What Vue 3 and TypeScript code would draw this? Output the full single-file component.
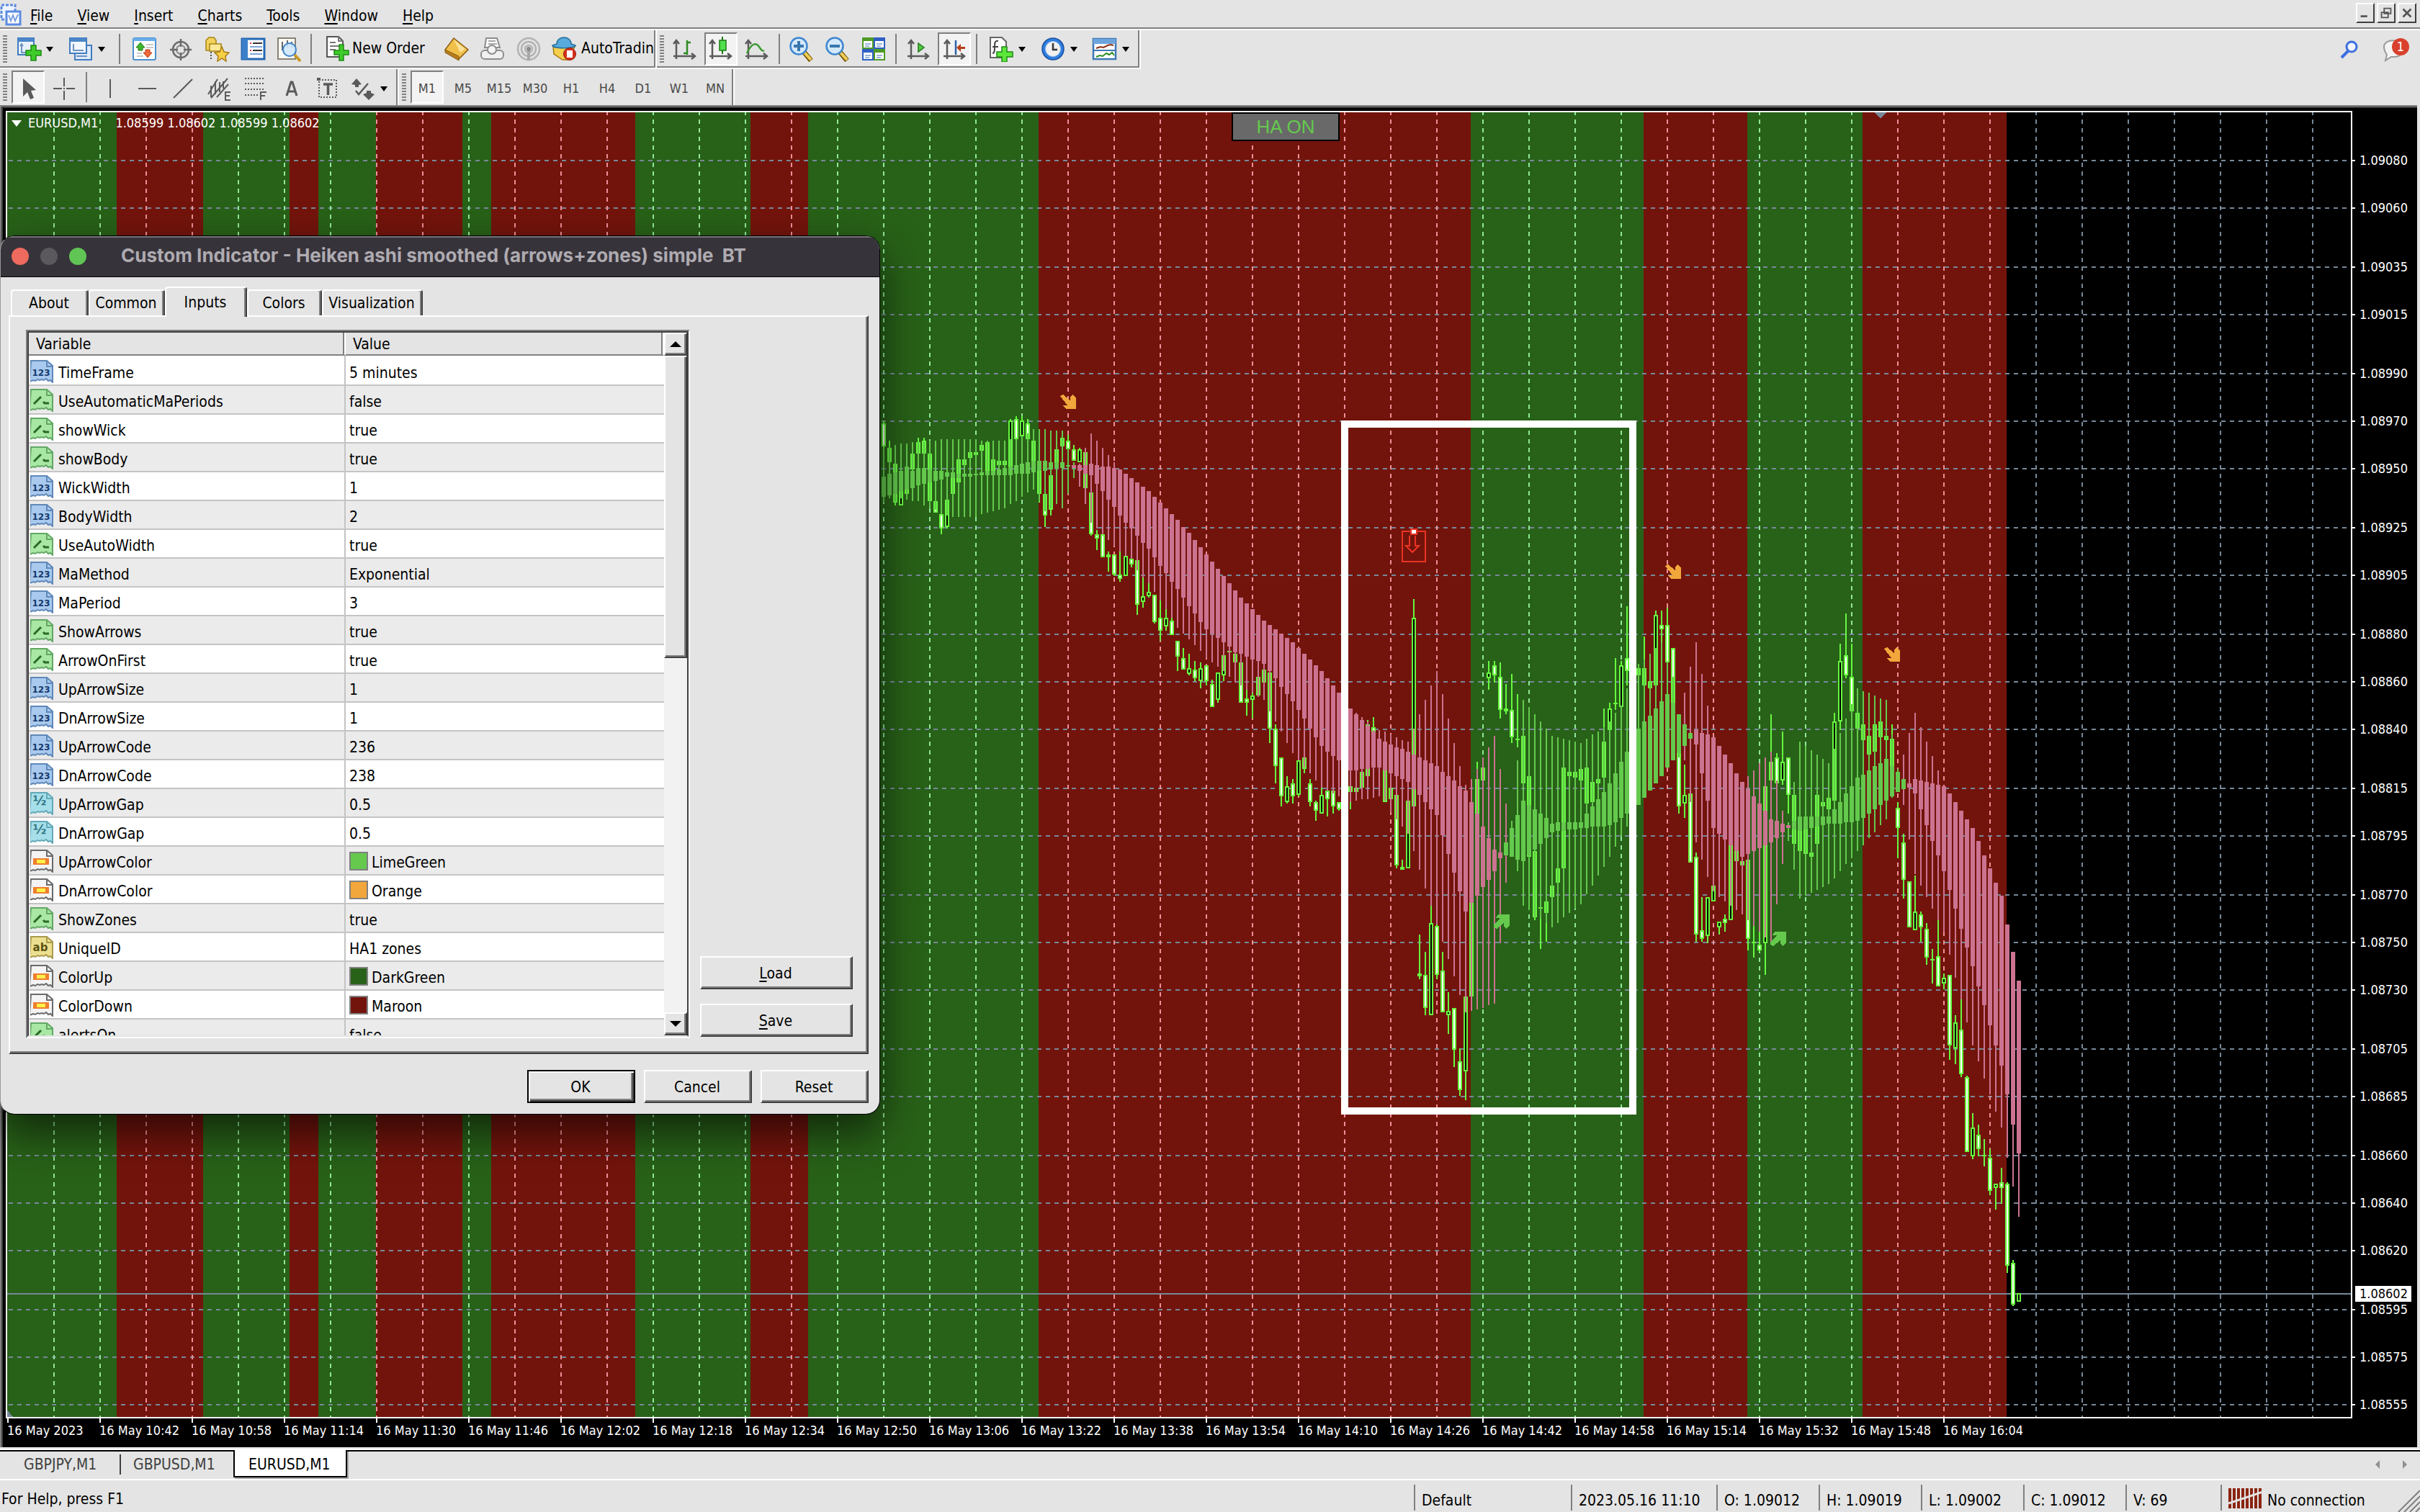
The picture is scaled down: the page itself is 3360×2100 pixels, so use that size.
<script setup lang="ts">
interface Bar {
  x: number
  high: number
  top: number
  bottom: number
  low: number
  kind: string
}

interface Run {
  from: number
  base: number
  unit: number
  rows: string
}

const menu = ['File', 'View', 'Insert', 'Charts', 'Tools', 'Window', 'Help']

const glyphs: Record<string, string> = {
  newChart:
    '<rect x="3" y="3" width="22" height="23" fill="#e8f1fb" stroke="#3f7cc0" stroke-width="2"/><rect x="3" y="3" width="22" height="5" fill="#4a86c8"/><path d="M8 12v11h9M6 14l2-3 2 3" fill="none" stroke="#6f93bd" stroke-width="2"/><path d="M21 13h7v7h7v7h-7v7h-7v-7h-7v-7h7z" fill="#3fcb2b" stroke="#1c8a12" stroke-width="1.5"/>',
  profiles:
    '<rect x="10" y="13" width="23" height="20" fill="#dfeafa" stroke="#3f7cc0" stroke-width="2"/><rect x="3" y="3" width="23" height="21" fill="#f2f7fd" stroke="#3f7cc0" stroke-width="2"/><rect x="3" y="3" width="23" height="5" fill="#4a86c8"/><path d="M8 11v9h14M12 28h15" fill="none" stroke="#6f93bd" stroke-width="2"/>',
  market:
    '<rect x="2" y="3" width="31" height="30" rx="2" fill="#fff" stroke="#4a8fd0" stroke-width="2"/><rect x="2" y="3" width="31" height="4" fill="#6aaeea"/><path d="M12 9l6 7h-3v4h-6v-4H6z" fill="#3fb52c" stroke="#1e7b14"/><path d="M22 30l-6-7h3v-4h6v4h3z" fill="#f0693a" stroke="#b93a14"/><path d="M20 12h10M20 16h10M7 24h7M7 28h9" stroke="#c9c9c9" stroke-width="2"/>',
  data:
    '<circle cx="18" cy="19" r="11" fill="none" stroke="#6b6b6b" stroke-width="2.5"/><circle cx="18" cy="19" r="6" fill="none" stroke="#8b8b8b" stroke-width="2"/><path d="M18 4v11M18 23v11M3 19h11M22 19h11" stroke="#6b6b6b" stroke-width="2.5"/>',
  navigator:
    '<path d="M3 6l4-4h7l3 4v14H3z" fill="#f2d25a" stroke="#a88416" stroke-width="1.5"/><rect x="8" y="11" width="16" height="10" fill="#fbe894" stroke="#a88416" stroke-width="1.5"/><path d="M10 22v12" stroke="#555" stroke-width="2" stroke-dasharray="2 2"/><path d="M25 15l3 7 7 1-5 5 1 7-6-4-6 4 1-7-5-5 7-1z" fill="#f7cf45" stroke="#a87a10" stroke-width="1.5"/>',
  terminal:
    '<rect x="3" y="4" width="31" height="28" fill="#fff" stroke="#2468b4" stroke-width="3"/><rect x="3" y="4" width="8" height="28" fill="#3c7fc9"/><path d="M14 10h2M14 20h2" stroke="#d33" stroke-width="2"/><path d="M18 10h13M18 20h13" stroke="#333" stroke-width="2"/><path d="M14 15h17M14 25h17" stroke="#7fa7dd" stroke-width="2"/>',
  tester:
    '<rect x="3" y="3" width="24" height="29" fill="#fbfaf5" stroke="#8a8375" stroke-width="2"/><path d="M9 8v12M16 6v10M22 8v8" stroke="#666" stroke-width="2"/><circle cx="19" cy="19" r="9" fill="#cfe7fb" fill-opacity=".9" stroke="#3c84cc" stroke-width="2"/><path d="M26 26l8 9" stroke="#c79a23" stroke-width="4"/>',
  order:
    '<path d="M4 2h16l6 6v22H4z" fill="#fff" stroke="#555" stroke-width="2"/><path d="M20 2v6h6M8 10h8M8 15h13M8 20h8" fill="none" stroke="#777" stroke-width="2"/><path d="M21 13h6v8h7v6h-7v8h-6v-8h-7v-6h7z" fill="#3fcb2b" stroke="#1c8a12" stroke-width="1.5"/>',
  book:
    '<path d="M14 3l20 16-13 13L2 19z" fill="#f0c04a" stroke="#8a5c10" stroke-width="1.5"/><path d="M2 19l19 9v6L2 23z" fill="#b87d1c" stroke="#8a5c10"/><path d="M14 5l16 13-7 5z" fill="#fbe09a"/>',
  printer:
    '<path d="M9 3h15l4 13H7z" fill="#fafafa" stroke="#8d8d8d" stroke-width="2"/><path d="M12 7h10M12 11h12" stroke="#a9a9a9" stroke-width="2"/><rect x="2" y="20" width="31" height="12" rx="5" fill="#f0f0f0" stroke="#8d8d8d" stroke-width="2"/><circle cx="17" cy="19" r="6" fill="#f5f5f5" stroke="#8d8d8d" stroke-width="2"/>',
  signals:
    '<g fill="none" stroke="#b3b3b3" stroke-width="2.5"><circle cx="18" cy="18" r="15"/><circle cx="18" cy="18" r="10"/><circle cx="18" cy="18" r="5"/></g><path d="M16 18h4v16h-4z" fill="#a8a8a8"/><circle cx="18" cy="18" r="3" fill="#8a8a8a"/>',
  auto:
    '<path d="M3 16h30l-9 18h-8L4 26z" fill="#f5cf4e" stroke="#a87a10" stroke-width="1.5"/><path d="M8 12c0-12 20-12 20 0l6 2c0 5-32 5-32 0z" fill="#58a9dc" stroke="#256f9f" stroke-width="1.5"/><circle cx="26" cy="26" r="8.5" fill="#d6301c" stroke="#8f1b0d"/><rect x="22" y="21" width="8" height="10" fill="#fff"/>',
  bars:
    '<path d="M6 32V7M2 11l4-5 4 5M2 28h29M27 24l5 4-5 4" fill="none" stroke="#5b5b5b" stroke-width="2.5"/><path d="M21 6v20M16 24h5M21 9h5" stroke="#2e8b22" stroke-width="2.5"/>',
  candles:
    '<path d="M6 32V7M2 11l4-5 4 5M2 28h29M27 24l5 4-5 4" fill="none" stroke="#5b5b5b" stroke-width="2.5"/><path d="M20 1v24" stroke="#1c7a14" stroke-width="2"/><rect x="16" y="6" width="9" height="14" fill="#4fe04c" stroke="#1c7a14" stroke-width="1.5"/>',
  line:
    '<path d="M6 32V7M2 11l4-5 4 5M2 28h29M27 24l5 4-5 4" fill="none" stroke="#5b5b5b" stroke-width="2.5"/><path d="M4 24c7-15 13-15 17-9s4 5 7 6" fill="none" stroke="#3f9a35" stroke-width="2.5"/>',
  zoomIn:
    '<path d="M21 22l10 12" stroke="#7c5b0c" stroke-width="7"/><path d="M21 22l10 11" stroke="#f0cf55" stroke-width="4"/><circle cx="14" cy="14" r="11.5" fill="#d3e9fb" stroke="#3f86cf" stroke-width="2.5"/><path d="M14 7v14M7 14h14" stroke="#3a77ad" stroke-width="4"/>',
  zoomOut:
    '<path d="M21 22l10 12" stroke="#7c5b0c" stroke-width="7"/><path d="M21 22l10 11" stroke="#f0cf55" stroke-width="4"/><circle cx="14" cy="14" r="11.5" fill="#d3e9fb" stroke="#3f86cf" stroke-width="2.5"/><path d="M7 14h14" stroke="#3a77ad" stroke-width="4"/>',
  tiles:
    '<path d="M2 2h16v16H2zM18 18h16v16H18z" fill="#4f9a26"/><path d="M18 2h16v16H18zM2 18h16v16H2z" fill="#2e5fc4"/><path d="M4 7h12v9H4zM20 7h12v9H20zM4 23h12v9H4zM20 23h12v9H20z" fill="#fff"/><path d="M6 11h8M22 11h8M6 27h8M22 27h8M6 14h6M22 14h6M6 30h6M22 30h6" stroke="#9db6dc" stroke-width="2"/>',
  scroll:
    '<path d="M8 32V7M4 11l4-5 4 5M3 28h28M27 24l5 4-5 4" fill="none" stroke="#5b5b5b" stroke-width="2.5"/><path d="M18 10l8 6-8 6z" fill="#55c94a" stroke="#1c7a14" stroke-width="1.5"/>',
  shift:
    '<path d="M8 32V7M4 11l4-5 4 5M3 28h28M27 24l5 4-5 4" fill="none" stroke="#5b5b5b" stroke-width="2.5"/><path d="M20 6v20" stroke="#2c62a8" stroke-width="2.5"/><path d="M21 16l6-5v4h6v3h-6v4z" fill="#b5401a"/>',
  indicators:
    '<path d="M3 2h16l6 6v22H3z" fill="#fff" stroke="#666" stroke-width="2"/><path d="M14 7c-5-1-5 3-5 8s0 9-3 9M6 15h8" fill="none" stroke="#444" stroke-width="2"/><path d="M19 15h7v7h8v7h-8v7h-7v-7h-7v-7h7z" fill="#5ce63a" stroke="#1c8a12" stroke-width="1.5"/>',
  clock:
    '<circle cx="18" cy="18" r="15" fill="#2f7fe0" stroke="#1a4fa0" stroke-width="1.5"/><circle cx="18" cy="18" r="10.500" fill="#f1f1f1" stroke="#9fbfe6"/><path d="M18 10v9h6" fill="none" stroke="#333" stroke-width="2.5"/>',
  template:
    '<rect x="2" y="4" width="31" height="28" fill="#fff" stroke="#3d78b8" stroke-width="2.5"/><rect x="2" y="4" width="31" height="7" fill="#6ea4dc"/><path d="M3 20h29" stroke="#3d78b8" stroke-width="2"/><path d="M6 17l6-2 4 1 6-3 4-1 4 1" fill="none" stroke="#8a2f14" stroke-width="2"/><path d="M6 29l5-2 4 1 5-4 4 2 4-3 3 4" fill="none" stroke="#2e8b22" stroke-width="2"/>',
  cursor: '<path d="M11 4v25l6-6 4 10 5-2-4-10 7-1z" fill="#5a5a5a"/>',
  cross: '<path d="M18 3v12M18 21v13M3 18h12M21 18h12" stroke="#5a5a5a" stroke-width="2"/><path d="M18 17v2" stroke="#5a5a5a" stroke-width="2"/>',
  vline: '<path d="M16 5v26" stroke="#5a5a5a" stroke-width="2"/>',
  hline: '<path d="M5 18h25" stroke="#5a5a5a" stroke-width="2"/>',
  trend: '<path d="M4 31L30 5" stroke="#5a5a5a" stroke-width="2"/>',
  channel:
    '<path d="M2 26L15 5M6 31L29 4M14 30L30 12M6 14v16M12 8v18M18 9v14M23 8v10" stroke="#5a5a5a" stroke-width="2"/><path d="M33 23h-7v11h7M26 28h6" fill="none" stroke="#5a5a5a" stroke-width="2"/>',
  fibo:
    '<path d="M3 4h28M3 11h28M3 19h28M3 27h18" stroke="#5a5a5a" stroke-width="2" stroke-dasharray="2 2"/><path d="M25 34V23h8M25 28h6" fill="none" stroke="#5a5a5a" stroke-width="2"/>',
  letterA: '<path d="M11 28l6-19h2l6 19M13 22h10" fill="none" stroke="#5a5a5a" stroke-width="3"/>',
  label:
    '<rect x="6" y="6" width="24" height="24" fill="none" stroke="#5a5a5a" stroke-width="2" stroke-dasharray="2 2"/><path d="M3 3h5v4H3z" fill="#5a5a5a"/><path d="M12 12h13M18.500 12v15" stroke="#5a5a5a" stroke-width="3.500"/>',
  shapes:
    '<path d="M9 4l7 8-4 1v3H7v-3l-5-1z" fill="#5a5a5a"/><path d="M26 34l8-8-5-2v-3h-6v3l-5 2z" fill="#5a5a5a"/><path d="M8 21l4 5 13-15" fill="none" stroke="#5a5a5a" stroke-width="2.5"/>',
}

const tools: string[] = ['vline', 'hline', 'trend', 'channel', 'fibo', 'letterA', 'label']
const frames = ['M1', 'M5', 'M15', 'M30', 'H1', 'H4', 'D1', 'W1', 'MN']

/* Plot geometry, measured from the plot's own top left corner. */
const STEP = 8
const FIRST_BAR = 1217
const priceY = (points: number): number => 1795 - (points - 555) * 3.2914
const snap = (value: number): number => Math.round(value / 2) * 2

const zoneEdges = [0, 152, 272, 392, 432, 512, 632, 672, 872, 1032, 1112, 1432, 2032, 2272, 2416, 2576, 2776]
const zones = zoneEdges.slice(0, -1).map((x, i) => ({
  x,
  width: zoneEdges[i + 1] - x,
  up: i % 2 === 0,
}))

const levels = [
  1080, 1060, 1035, 1015, 990, 970, 950, 925, 905, 880, 860, 840, 815, 795, 770, 750, 730, 705, 685, 660, 640, 620,
  595, 575, 555,
].map((points) => ({
  text: '1.' + String(8000 + points).padStart(5, '0'),
  y: snap(priceY(points) - 1) + 1,
}))
const current = { text: '1.08602', y: 1641 }

const columns = Array.from({ length: 50 }, (_, i) => {
  const x = 64 * (i + 1)
  const zone = zones.find((z) => x >= z.x && x < z.x + z.width)
  return { x: x + 1, tone: zone ? (zone.up ? 'grid-up' : 'grid-down') : 'grid-none' }
})

const times = [
  '2023', '10:42', '10:58', '11:14', '11:30', '11:46', '12:02', '12:18', '12:34', '12:50', '13:06', '13:22', '13:38',
  '13:54', '14:10', '14:26', '14:42', '14:58', '15:14', '15:32', '15:48', '16:04',
]

/* Each row is "high top bottom low kind"; w = falling, b = rising, d = flat. */
const candleRuns: Run[] = [
  {
    from: 0,
    base: 344,
    unit: 0.4082,
    rows: `205 216 293 300 w;274 299 348 360 w;352 353 485 495 w;375 378 494 494 b;363 363 455 475 b;280 318 372 380 b;265 279 318 318 b;265 274 318 318 b;318 318 480 505 w;480 480 518 518 w;520 524 572 592 w;475 475 568 572 b;402 402 456 456 b;338 338 416 416 b;338 338 358 358 b;314 314 332 332 b;314 314 322 322 b;278 289 308 308 b;279 279 377 377 w;338 338 377 377 b;343 343 358 358 w;343 343 358 358 w;201 206 362 362 b;191 201 269 269 w;191 206 260 260 b;201 216 269 269 w;274 274 345 345 w;347 347 456 485 w;456 456 528 568 w;392 392 510 529 b;304 304 348 348 b;265 265 293 293 b;255 274 303 303 w;289 304 343 343 w;299 304 348 348 b;314 314 436 436 w;451 451 592 597 w;578 593 607 646 w;593 593 670 670 w;651 661 670 720 w;661 661 730 735 w;651 730 744 754 w;666 666 734 734 b;676 676 695 705 w;681 681 832 866 w;740 804 823 842 b;759 789 804 808 b;799 799 892 896 w;818 877 921 955 w;848 877 906 921 b;877 887 936 936 w;955 955 1009 1058 w;980 1014 1053 1053 w;999 1049 1068 1073 b;1024 1053 1083 1092 w;1029 1049 1092 1117 b;1039 1039 1093 1107 w;1088 1102 1181 1181 w;1063 1063 1156 1166 b;1004 1004 1073 1092 b;990 990 995 995 d;1000 1000 1029 1029 w;1029 1029 1166 1166 w;1122 1151 1166 1210 w;1132 1142 1156 1220 b;1078 1078 1142 1142 b;1053 1053 1098 1098 b;1063 1063 1254 1303 w;1240 1254 1382 1441 w;1352 1352 1485 1519 w;1416 1451 1504 1509 b;1426 1441 1485 1509 w;1362 1362 1480 1484 b;1352 1352 1392 1406 w;1426 1441 1504 1519 w;1499 1504 1533 1568 w;1455 1480 1543 1543 b;1465 1465 1494 1553 w;1465 1465 1519 1543 w;1504 1504 1528 1533 w`,
  },
  {
    from: 81,
    base: 544,
    unit: 0.5485,
    rows: `715 715 728 773 w;718 718 728 728 w;678 678 717 717 b;547 558 689 689 b;540 565 640 640 w;620 620 640 640 w;650 650 755 755 w;718 718 748 748 w;737 737 914 922 w;901 919 926 926 d;751 751 922 922 b;241 288 766 766 b;1090 1189 1196 1202 d;1134 1192 1276 1294 w;1018 1061 1294 1294 b;1065 1068 1191 1202 w;1134 1181 1286 1286 w;1236 1284 1294 1342 b;1276 1276 1381 1425 w;1378 1411 1484 1498 w;1247 1247 1436 1509 b;900 900 1247 1247 b;653 696 784 784 b;642 667 700 700 b;397 427 440 470 b;397 407 433 451 w;401 438 521 542 w;456 519 525 531 d;430 521 591 605 w;481 594 599 616 d;587 587 707 707 w;689 689 892 892 w;875 880 1047 1054 w;1021 1021 1025 1127 d;1007 1007 1035 1109 b;966 966 995 995 b;923 923 958 958 b;667 667 922 922 b;678 680 690 690 b;678 680 693 693 b;671 671 700 700 b;667 667 758 758 w;704 704 755 755 b;696 697 706 706 b;518 602 693 693 b;503 518 573 573 b;390 503 507 521 d;397 408 514 514 b;259 390 423 459 w;400 410 430 440 w;405 416 434 434 w;335 416 459 459 w;449 449 468 468 w;270 281 459 459 b;270 306 317 350 w;263 306 401 401 w;365 365 520 520 w;600 600 765 784 w;660 737 758 795 b;733 733 908 908 w;882 893 1090 1109 w;995 1079 1101 1109 w;995 995 1094 1112 b;966 966 1006 1006 b;1057 1057 1072 1090 b;1040 1050 1060 1083 w;864 864 1053 1053 b`,
  },
  {
    from: 148,
    base: 544,
    unit: 0.4464,
    rows: `1080 1080 1110 1110 w;1111 1111 1123 1123 w;1107 1107 1353 1389 w;1312 1362 1365 1411 d;1331 1371 1388 1393 w;878 878 1365 1465 b;654 802 859 859 w;776 789 868 868 w;708 802 859 873 b;789 789 904 962 w;865 905 1056 1056 w;980 980 1079 1079 w;1000 1000 1088 1088 w;1084 1084 1097 1097 w;905 905 1056 1056 b;927 927 941 941 b;914 914 949 949 b;650 677 925 925 b;434 488 676 702 b;340 470 532 542 w;434 538 644 644 w;650 650 698 698 w;685 685 734 734 w;721 721 779 779 w;685 685 770 770 b;676 676 725 725 b;721 721 734 734 w;685 730 820 820 w;926 944 1007 1102 w;1025 1052 1168 1227 w;1174 1174 1316 1316 w;1156 1268 1326 1326 b;1268 1277 1316 1362 w;1303 1322 1411 1433 w;1384 1416 1419 1491 d;1295 1407 1500 1500 w;1460 1474 1491 1510 b`,
  },
  {
    from: 185,
    base: 944,
    unit: 0.4847,
    rows: `524 524 725 767 w;640 660 733 779 b;594 682 808 817 w;813 818 1031 1031 w;920 962 1042 1052 b;953 983 1025 1044 w;994 1040 1044 1073 d;1023 1049 1142 1154 w;1122 1122 1134 1197 b;1077 1118 1134 1180 w;1118 1122 1357 1377 w;1341 1350 1468 1473 w;1437 1437 1460 1460 b`,
  },
]

/* Smoothed bars; g = rising, p = falling, m / n = the two mixed turning bars. */
const smoothRuns: Run[] = [
  {
    from: 0,
    base: 344,
    unit: 0.4082,
    rows: `300 397 465 485 g;300 386 461 470 g;289 380 458 480 g;284 378 446 470 g;284 363 442 475 g;279 375 436 480 g;279 367 426 480 g;279 367 421 494 g;274 372 416 505 g;274 377 412 510 g;269 377 407 524 g;269 382 397 530 g;269 382 400 534 g;269 387 400 534 g;269 387 397 534 g;269 387 397 534 g;269 387 392 534 g;274 382 392 524 g;274 377 392 519 g;274 377 391 514 g;274 372 391 510 g;274 367 391 505 g;269 363 391 490 g;269 358 387 480 g;260 353 387 465 g;250 348 387 451 g;235 343 382 441 g;235 343 377 480 g;235 343 377 515 g;240 348 372 505 g;240 348 368 490 g;240 348 367 505 g;300 358 363 456 g;350 358 367 402 n;355 358 377 431 p;299 358 387 490 p;250 353 391 554 p;274 358 421 573 p;299 363 446 593 p;323 363 475 612 p;348 367 500 632 p;372 372 529 651 p;387 387 554 666 p;402 402 573 676 p;416 416 598 715 p;431 431 622 740 p;446 446 642 759 p;465 465 671 790 p;485 485 700 818 p;505 505 725 848 p;524 524 754 877 p;544 544 779 911 p;568 568 808 931 p;588 588 838 951 p;612 612 862 970 p;637 637 892 990 p;661 661 916 1014 p;686 686 931 1029 p;710 710 946 1044 p;735 735 960 1058 p;759 759 975 1078 p;784 784 995 1098 p;808 808 1000 1107 p;828 828 1009 1122 p;848 848 1019 1132 p;867 867 1024 1147 p;887 887 1034 1156 p;902 902 1058 1196 p;916 916 1083 1230 p;931 931 1112 1264 p;946 946 1137 1303 p;960 960 1161 1338 p;980 980 1191 1362 p;1000 1000 1220 1387 p;1019 1019 1254 1406 p;1039 1039 1284 1431 p;1058 1058 1313 1455 p;1083 1083 1333 1465 p;1107 1107 1347 1475 p;1132 1132 1362 1485 p;1160 1160 1380 1495 p;1186 1186 1396 1504 p;1200 1205 1396 1499 p;1215 1225 1392 1494 p;1230 1243 1392 1494 p;1260 1264 1387 1490 p;1259 1289 1387 1485 p`,
  },
  {
    from: 87,
    base: 544,
    unit: 0.5485,
    rows: `575 602 675 752 p;583 609 682 780 p;591 616 689 799 p;598 620 696 817 p;602 627 704 835 p;569 635 722 879 p;532 642 737 926 p;496 649 755 974 p;459 656 773 1018 p;423 664 788 1065 p;481 678 839 1109 p;543 689 886 1152 p;605 700 934 1196 p;664 715 981 1243 p;710 726 1032 1287 p;696 755 1010 1284 p;671 784 992 1280 p;642 817 970 1276 p;616 846 952 1269 p;587 875 930 1265 p;671 882 897 1112 p;758 857 890 958 m;802 820 893 893 g;649 788 901 930 g;496 751 904 1018 g;514 762 890 1028 g;532 773 875 1047 g;551 784 861 1050 g;569 795 846 1061 g;587 810 831 1072 g;591 806 828 1061 g;594 806 828 1047 g;598 806 824 1036 g;602 806 824 1025 g;605 806 820 1014 g;594 784 820 988 g;583 766 817 966 g;576 748 817 941 g;565 729 817 919 g;550 707 813 893 g;530 682 806 868 g;510 653 795 842 g;467 627 784 817 g;440 600 773 790 g;405 569 762 762 g;394 551 744 744 g;379 536 726 726 g;365 518 707 707 g;350 500 689 689 g;401 481 667 667 g;437 505 649 649 g;532 532 631 640 g;478 558 613 649 m;412 580 594 755 m;350 573 609 857 p;430 580 682 901 p;511 583 751 944 p;591 591 820 980 p`,
  },
  {
    from: 145,
    base: 544,
    unit: 0.4464,
    rows: `753 753 1026 1223 p;780 780 1044 1236 p;806 806 1061 1250 p;838 838 1080 1263 p;865 865 1097 1277 p;847 887 1088 1295 p;829 909 1079 1312 p;806 932 1070 1331 p;789 953 1061 1347 p;771 981 1052 1370 p;860 986 1039 1245 p;953 995 1021 1120 p;989 999 1006 1048 n;865 986 1012 1138 g;739 972 1017 1228 g;753 972 1012 1218 g;766 972 1008 1210 g;780 972 1004 1201 g;793 972 999 1192 g;806 972 995 1183 g;762 950 995 1165 g;712 927 995 1142 g;668 900 990 1120 g;623 878 990 1102 g;573 851 986 1080 g;582 842 977 1061 g;587 829 962 1039 g;596 815 949 1021 g;605 806 936 999 g;609 793 923 981 g;717 815 909 914 g;825 833 896 896 g;780 856 887 936 m;712 869 883 1044 p;650 856 900 1151 p;694 860 949 1187 p;739 865 999 1223 p;784 869 1048 1259 p;829 874 1093 1295 p;878 878 1142 1331 p;900 900 1201 1402 p;927 927 1259 1474 p`,
  },
  {
    from: 187,
    base: 944,
    unit: 0.4847,
    rows: `54 54 392 594 p;79 79 446 660 p;103 103 499 726 p;140 140 557 772 p;182 182 611 821 p;219 219 668 867 p;260 260 726 916 p;297 297 784 962 p;380 380 867 1048 p;458 458 953 1131 p;541 541 1035 1217 p`,
  },
]

const expand = (runs: Run[]): Bar[] =>
  runs.flatMap((run) =>
    run.rows.split(';').map((row, i) => {
      const parts = row.trim().split(' ')
      const [high, top, bottom, low] = parts.slice(0, 4).map((v) => snap(run.base + Number(v) * run.unit))
      return { x: FIRST_BAR + (run.from + i) * STEP, high, top, bottom: Math.max(bottom, top + 2), low, kind: parts[4] }
    }),
  )

const candles = expand(candleRuns)
const smooth = expand(smoothRuns)
const bodyTone = (kind: string): string => (kind === 'g' || kind === 'm' ? 'ha-up' : 'ha-down')
const wickTone = (kind: string): string => (kind === 'g' || kind === 'n' ? 'ha-up' : 'ha-down')

const marks = [
  { x: 1462, y: 392, up: false },
  { x: 2302, y: 628, up: false },
  { x: 2606, y: 743, up: false },
  { x: 2064, y: 1114, up: true },
  { x: 2448, y: 1138, up: true },
]

const dialogTitle = 'Custom Indicator - Heiken ashi smoothed (arrows+zones) simple  BT'
const dialogTabs = [
  { name: 'About', width: 108 },
  { name: 'Common', width: 106 },
  { name: 'Inputs', width: 114 },
  { name: 'Colors', width: 104 },
  { name: 'Visualization', width: 140 },
]

interface Param {
  type: 'int' | 'bool' | 'real' | 'color' | 'text'
  name: string
  value: string
  swatch?: string
}
const params: Param[] = [
  { type: 'int', name: 'TimeFrame', value: '5 minutes' },
  { type: 'bool', name: 'UseAutomaticMaPeriods', value: 'false' },
  { type: 'bool', name: 'showWick', value: 'true' },
  { type: 'bool', name: 'showBody', value: 'true' },
  { type: 'int', name: 'WickWidth', value: '1' },
  { type: 'int', name: 'BodyWidth', value: '2' },
  { type: 'bool', name: 'UseAutoWidth', value: 'true' },
  { type: 'int', name: 'MaMethod', value: 'Exponential' },
  { type: 'int', name: 'MaPeriod', value: '3' },
  { type: 'bool', name: 'ShowArrows', value: 'true' },
  { type: 'bool', name: 'ArrowOnFirst', value: 'true' },
  { type: 'int', name: 'UpArrowSize', value: '1' },
  { type: 'int', name: 'DnArrowSize', value: '1' },
  { type: 'int', name: 'UpArrowCode', value: '236' },
  { type: 'int', name: 'DnArrowCode', value: '238' },
  { type: 'real', name: 'UpArrowGap', value: '0.5' },
  { type: 'real', name: 'DnArrowGap', value: '0.5' },
  { type: 'color', name: 'UpArrowColor', value: 'LimeGreen', swatch: '#64c94d' },
  { type: 'color', name: 'DnArrowColor', value: 'Orange', swatch: '#f1a73b' },
  { type: 'bool', name: 'ShowZones', value: 'true' },
  { type: 'text', name: 'UniqueID', value: 'HA1 zones' },
  { type: 'color', name: 'ColorUp', value: 'DarkGreen', swatch: '#286118' },
  { type: 'color', name: 'ColorDown', value: 'Maroon', swatch: '#73140c' },
  { type: 'bool', name: 'alertsOn', value: 'false' },
]
const paper: Record<Param['type'], [string, string]> = {
  int: ['#a9c9ee', '#5f88b8'],
  bool: ['#a9e8a4', '#62a864'],
  real: ['#a6dfe9', '#62a9b8'],
  color: ['#f4f4f4', '#6a6a6a'],
  text: ['#ece090', '#a99a4c'],
}

const docs = ['GBPJPY,M1', 'GBPUSD,M1', 'EURUSD,M1']
</script>

<template>
  <div class="app">
    <header class="menubar">
      <svg class="logo" viewBox="0 0 30 32" aria-hidden="true">
        <rect x="2" y="3" width="19" height="20" fill="#eef4ff" stroke="#5b8be0" stroke-width="3" stroke-dasharray="4 2" />
        <rect x="9" y="12" width="19" height="18" fill="#fff" stroke="#5b8be0" stroke-width="3" />
        <path d="M12 17l3 8 3-8 3 8 4-9" fill="none" stroke="#7c9fe0" stroke-width="2" />
      </svg>
      <nav class="menu">
        <button v-for="item in menu" :key="item" type="button"><u>{{ item[0] }}</u>{{ item.slice(1) }}</button>
      </nav>
      <div class="mdi">
        <button type="button" aria-label="Minimize"><svg viewBox="0 0 24 24"><path d="M5 17h10" stroke="#555" stroke-width="3" /></svg></button>
        <button type="button" aria-label="Restore"><svg viewBox="0 0 24 24"><path d="M9 5h10v8H9zM5 11h10v8H5z" fill="#e4e4e4" stroke="#555" stroke-width="2" /></svg></button>
        <button type="button" aria-label="Close"><svg viewBox="0 0 24 24"><path d="M6 6l12 12M18 6L6 18" stroke="#555" stroke-width="3" /></svg></button>
      </div>
    </header>

    <div class="bar">
      <div class="group group-main">
        <i class="grip"></i>
        <button class="drop" type="button" aria-label="New chart"><svg viewBox="0 0 36 36" v-html="glyphs.newChart"></svg><i class="caret"></i></button>
        <button class="drop" type="button" aria-label="Profiles"><svg viewBox="0 0 36 36" v-html="glyphs.profiles"></svg><i class="caret"></i></button>
        <i class="sep roomy"></i>
        <button v-for="name in ['market', 'data', 'navigator', 'terminal', 'tester']" :key="name" class="tool" type="button" :aria-label="name">
          <svg viewBox="0 0 36 36" v-html="glyphs[name]"></svg>
        </button>
        <i class="sep roomy"></i>
        <button class="order" type="button"><svg viewBox="0 0 36 36" v-html="glyphs.order"></svg>New Order</button>
        <button v-for="name in ['book', 'printer', 'signals']" :key="name" class="tool" type="button" :aria-label="name">
          <svg viewBox="0 0 36 36" v-html="glyphs[name]"></svg>
        </button>
        <button class="auto" type="button"><svg viewBox="0 0 36 36" v-html="glyphs.auto"></svg>AutoTrading</button>
      </div>
      <div class="group">
        <i class="grip"></i>
        <button class="tool" type="button" aria-label="Bar chart"><svg viewBox="0 0 36 36" v-html="glyphs.bars"></svg></button>
        <button class="tool on" type="button" aria-label="Candlesticks"><svg viewBox="0 0 36 36" v-html="glyphs.candles"></svg></button>
        <button class="tool" type="button" aria-label="Line chart"><svg viewBox="0 0 36 36" v-html="glyphs.line"></svg></button>
        <i class="sep"></i>
        <button class="tool" type="button" aria-label="Zoom in"><svg viewBox="0 0 36 36" v-html="glyphs.zoomIn"></svg></button>
        <button class="tool" type="button" aria-label="Zoom out"><svg viewBox="0 0 36 36" v-html="glyphs.zoomOut"></svg></button>
        <button class="tool" type="button" aria-label="Tile windows"><svg viewBox="0 0 36 36" v-html="glyphs.tiles"></svg></button>
        <i class="sep"></i>
        <button class="tool" type="button" aria-label="Auto scroll"><svg viewBox="0 0 36 36" v-html="glyphs.scroll"></svg></button>
        <button class="tool on" type="button" aria-label="Chart shift"><svg viewBox="0 0 36 36" v-html="glyphs.shift"></svg></button>
        <i class="sep roomy"></i>
        <button class="drop" type="button" aria-label="Indicators"><svg viewBox="0 0 36 36" v-html="glyphs.indicators"></svg><i class="caret"></i></button>
        <button class="drop" type="button" aria-label="Periods"><svg viewBox="0 0 36 36" v-html="glyphs.clock"></svg><i class="caret"></i></button>
        <button class="drop" type="button" aria-label="Templates"><svg viewBox="0 0 36 36" v-html="glyphs.template"></svg><i class="caret"></i></button>
      </div>
      <div class="bar-end">
        <button type="button" aria-label="Search">
          <svg viewBox="0 0 28 28"><path d="M12 16L3 25" stroke="#3c6fe0" stroke-width="4" /><circle cx="17" cy="10" r="7" fill="#f2f6ff" stroke="#3c6fe0" stroke-width="3" /></svg>
        </button>
        <button type="button" class="chat" aria-label="Notifications">
          <svg viewBox="0 0 40 40"><path d="M4 16c0-12 26-12 26 2s-12 12-16 12l-8 5 2-8c-2-3-4-6-4-11z" fill="#f4f4f4" stroke="#9a9a9a" stroke-width="2" /><circle cx="27" cy="16" r="12" fill="#d9412c" /></svg>
          <span>1</span>
        </button>
      </div>
    </div>

    <div class="bar bar-low">
      <div class="group">
        <i class="grip"></i>
        <button class="tool on" type="button" aria-label="Cursor"><svg viewBox="0 0 36 36" v-html="glyphs.cursor"></svg></button>
        <button class="tool" type="button" aria-label="Crosshair"><svg viewBox="0 0 36 36" v-html="glyphs.cross"></svg></button>
        <i class="sep roomy"></i>
        <button v-for="name in tools" :key="name" class="tool" type="button" :aria-label="name">
          <svg viewBox="0 0 36 36" v-html="glyphs[name]"></svg>
        </button>
        <button class="drop" type="button" aria-label="Arrows"><svg viewBox="0 0 36 36" v-html="glyphs.shapes"></svg><i class="caret"></i></button>
      </div>
      <div class="group">
        <i class="grip"></i>
        <button v-for="frame in frames" :key="frame" class="tool frame" :class="{ on: frame === 'M1' }" type="button">{{ frame }}</button>
      </div>
    </div>

    <main class="chart">
      <div class="upper">
        <div class="plot">
          <svg class="canvas" aria-label="EURUSD one minute chart">
            <rect v-for="z in zones" :key="z.x" :x="z.x" y="0" :width="z.width" height="100%" :class="z.up ? 'zone-up' : 'zone-down'" />
            <g class="rows">
              <line v-for="l in levels" :key="l.y" x1="2" x2="100%" :y1="l.y" :y2="l.y" />
            </g>
            <g class="cols">
              <line v-for="c in columns" :key="c.x" :x1="c.x" :x2="c.x" y1="-2" y2="100%" :class="c.tone" />
            </g>
            <line class="last" x1="0" x2="100%" :y1="current.y" :y2="current.y" />
            <g v-for="c in candles" :key="'c' + c.x">
              <rect class="lime" :x="c.x - 1" :y="c.high" width="2" :height="Math.max(0, c.low - c.high)" />
              <rect class="lime" :x="c.x - 3" :y="c.top" width="6" :height="c.bottom - c.top" />
              <rect
                v-if="c.bottom - c.top > 4"
                :class="c.kind === 'b' ? 'rise' : 'fall'"
                :x="c.x - 1"
                :y="c.top + 2"
                width="2"
                :height="c.bottom - c.top - 4"
              />
            </g>
            <g v-for="s in smooth" :key="'s' + s.x">
              <rect :class="wickTone(s.kind)" :x="s.x - 1" :y="s.high" width="2" :height="Math.max(0, s.low - s.high)" />
              <rect :class="bodyTone(s.kind)" :x="s.x - 3" :y="s.top" width="6" :height="s.bottom - s.top" />
            </g>
            <g v-for="m in marks" :key="m.x" :transform="`translate(${m.x} ${m.y})`">
              <path v-if="m.up" class="mark-up" d="M0 18L4 20L14 12V16L17 20L22 16V0H6L3 5H9L0 14Z" />
              <path v-else class="mark-down" d="M0 2L4 0L14 8V4L17 0L22 4V20H8L3 15H10Z" />
            </g>
            <g fill="none" stroke="#ea3323" stroke-width="2">
              <rect x="1937" y="582" width="32" height="42" />
              <path d="M1947 588v14h-5l9 9 9-9h-5v-14" />
              <rect x="1949" y="579" width="8" height="7" fill="#fff" />
            </g>
            <rect x="1857" y="433" width="400" height="954" fill="none" stroke="#fff" stroke-width="10" />
            <path d="M0 1802v10h8z" fill="#778899" />
            <path d="M2593 0h16l-8 9z" fill="#778899" />
          </svg>
          <div class="caption">
            <i></i>
            <span>EURUSD,M1</span>
            <span>1.08599 1.08602 1.08599 1.08602</span>
          </div>
          <button class="toggle" type="button">HA ON</button>
        </div>
        <div class="prices">
          <span v-for="l in levels" :key="l.y" class="price" :style="{ top: l.y - 9 + 'px' }">{{ l.text }}</span>
          <span class="price price-now" :style="{ top: current.y - 9 + 'px' }">{{ current.text }}</span>
        </div>
      </div>
      <div class="times">
        <span v-for="t in times" :key="t">16 May {{ t }}</span>
      </div>
    </main>

    <nav class="docs">
      <a v-for="d in docs" :key="d" href="#" :class="{ active: d === 'EURUSD,M1' }">{{ d }}</a>
      <div class="docs-end"><i class="to-left"></i><i class="to-right"></i></div>
    </nav>

    <footer class="status">
      <span class="hint">For Help, press F1</span>
      <span class="cell cell-profile">Default</span>
      <span class="cell cell-date">2023.05.16 11:10</span>
      <span class="cell cell-price">O: 1.09012</span>
      <span class="cell cell-price">H: 1.09019</span>
      <span class="cell cell-price">L: 1.09002</span>
      <span class="cell cell-price">C: 1.09012</span>
      <span class="cell cell-vol">V: 69</span>
      <span class="cell cell-link">
        <svg viewBox="0 0 48 28" aria-hidden="true">
          <path d="M2 0v28M8 0v28M14 0v28M20 0v28M26 0v28M32 0v28M38 0v28M44 0v28" stroke="#8a2411" stroke-width="4" />
          <path d="M0 21L48 5" stroke="#e4e4e4" stroke-width="3" />
        </svg>
        No connection
      </span>
      <svg class="corner" viewBox="0 0 32 32" aria-hidden="true"><path d="M2 32L32 2M10 32L32 10M18 32L32 18M26 32l6-6" stroke="#808080" stroke-width="2" /></svg>
    </footer>

    <section class="dialog" role="dialog" aria-labelledby="dialog-title">
      <header class="title">
        <button class="dot red" type="button" aria-label="Close"></button>
        <button class="dot gray" type="button" aria-label="Minimize"></button>
        <button class="dot green" type="button" aria-label="Zoom"></button>
        <h1 id="dialog-title">{{ dialogTitle }}</h1>
      </header>
      <div class="tabs" role="tablist">
        <button
          v-for="t in dialogTabs"
          :key="t.name"
          type="button"
          role="tab"
          :class="{ current: t.name === 'Inputs' }"
          :style="{ width: t.width + 'px' }"
        >{{ t.name }}</button>
      </div>
      <div class="panel">
        <div class="list">
          <div class="view">
            <table>
              <thead>
                <tr><th>Variable</th><th>Value</th></tr>
              </thead>
              <tbody>
                <tr v-for="p in params" :key="p.name">
                  <td>
                    <div class="entry">
                      <svg viewBox="0 0 32 32" aria-hidden="true">
                        <path
                          d="M1 1h22l8 7v23l-3-3-3 1-3-3-3 2-3-1-3 1-3-1-3 2-3-1-5 2z"
                          :fill="paper[p.type][0]"
                          :stroke="paper[p.type][1]"
                          stroke-width="2"
                        />
                        <path d="M23 1v8h8" fill="none" :stroke="paper[p.type][1]" stroke-width="2" />
                        <text v-if="p.type === 'int'" x="15" y="22" class="num">123</text>
                        <text v-else-if="p.type === 'text'" x="14" y="21" class="abc">ab</text>
                        <text v-else-if="p.type === 'real'" x="13" y="18" class="half">½</text>
                        <path v-else-if="p.type === 'bool'" d="M5 21l10-10M18 18l2 2h6" fill="none" stroke="#276b26" stroke-width="3" />
                        <template v-else>
                          <rect x="4" y="12" width="22" height="9" fill="#ef7e2e" />
                          <rect x="9" y="14" width="12" height="5" fill="#fdf04a" />
                        </template>
                      </svg>
                      <span>{{ p.name }}</span>
                    </div>
                  </td>
                  <td>
                    <div class="entry"><i v-if="p.swatch" class="swatch" :style="{ background: p.swatch }"></i><span>{{ p.value }}</span></div>
                  </td>
                </tr>
              </tbody>
            </table>
          </div>
          <div class="scroll">
            <button type="button" class="up" aria-label="Scroll up"></button>
            <div class="thumb"></div>
            <div class="track"></div>
            <button type="button" class="down" aria-label="Scroll down"></button>
          </div>
        </div>
        <div class="side">
          <button class="push" type="button"><span><u>L</u>oad</span></button>
          <button class="push" type="button"><span><u>S</u>ave</span></button>
        </div>
      </div>
      <div class="actions">
        <button class="push default" type="button">OK</button>
        <button class="push" type="button">Cancel</button>
        <button class="push" type="button">Reset</button>
      </div>
    </section>
  </div>
</template>

<style>
body {
  margin: 0;
  background: #e4e4e4;
}
</style>

<style scoped>
.app {
  position: relative;
  display: flex;
  flex-direction: column;
  min-height: 100vh;
  overflow: hidden;
  background: #e4e4e4;
  color: #000;
  font-family: 'DejaVu Sans Condensed', 'DejaVu Sans', sans-serif;
  font-size: 21px;
  line-height: 26px;
}
* {
  box-sizing: border-box;
}
button {
  margin: 0;
  padding: 0;
  border: 0;
  background: none;
  color: inherit;
  font: inherit;
  white-space: nowrap;
}
u {
  text-decoration-thickness: 2px;
  text-underline-offset: 3px;
}

.menubar {
  display: flex;
  align-items: center;
  height: 42px;
  border-bottom: 2px solid #fff;
  box-shadow: inset 0 -2px #808080;
}
.logo {
  width: 30px;
  height: 32px;
}
.menu {
  display: flex;
  flex: 1;
  margin-left: -5px;
}
.menu button {
  padding: 4px 17px 0;
}
.mdi {
  display: flex;
  gap: 3px;
  padding: 0 5px 4px 0;
}
.mdi button {
  width: 26px;
  height: 28px;
  border: 2px solid;
  border-color: #fff #404040 #404040 #fff;
}
.mdi svg {
  display: block;
  width: 22px;
  height: 24px;
}

.bar {
  display: flex;
  height: 54px;
}
.bar-low {
  height: 50px;
}
.group {
  display: flex;
  align-items: center;
  padding-left: 4px;
  border-right: 2px solid #fff;
  border-bottom: 2px solid #fff;
  box-shadow: inset -2px -2px #808080;
}
.bar-low .group {
  border-bottom: 0;
  box-shadow: inset -2px 0 #808080;
}
.group-main {
  width: 912px;
}
.grip {
  width: 6px;
  height: 38px;
  margin-right: 4px;
  background: repeating-linear-gradient(#808080 0 2px, transparent 2px 4px);
}
.group-main .grip {
  margin-right: 6px;
}
.sep {
  width: 2px;
  height: 42px;
  margin: 0 5px;
  background: #808080;
}
.sep.roomy {
  margin-right: 9px;
}
.tool {
  display: flex;
  align-items: center;
  justify-content: center;
  flex: none;
  width: 46px;
  height: 46px;
  margin: 0 2px;
}
.bar-low .tool,
.bar-low .drop {
  padding-top: 4px;
}
.tool svg,
.drop svg,
.order svg,
.auto svg {
  flex: none;
  width: 36px;
  height: 36px;
}
.on {
  border: 2px solid;
  border-color: #808080 #fff #fff #808080;
  background: #f3f3f3;
}
.frame {
  color: #4a4a4a;
  font-size: 18px;
}
.drop {
  display: flex;
  align-items: center;
  flex: none;
  gap: 6px;
  width: 72px;
  height: 46px;
  padding-left: 6px;
}
.caret {
  border: 5px solid transparent;
  border-top: 7px solid #000;
  border-bottom: 0;
}
.order {
  display: flex;
  align-items: center;
  flex: none;
  gap: 3px;
  width: 167px;
  padding-left: 8px;
}
.auto {
  display: flex;
  align-items: center;
  flex: 1;
  gap: 6px;
  min-width: 0;
  margin-right: 2px;
  padding-left: 6px;
  overflow: hidden;
}
.order,
.auto {
  height: 46px;
  padding-bottom: 2px;
}
.bar-end {
  display: flex;
  align-items: center;
  gap: 30px;
  margin-left: auto;
  padding-right: 14px;
}
.bar-end svg {
  display: block;
  width: 28px;
  height: 28px;
}
.bar-end .chat {
  position: relative;
}
.bar-end .chat svg {
  width: 40px;
  height: 40px;
}
.chat span {
  position: absolute;
  left: 21px;
  top: 4px;
  width: 12px;
  color: #fff;
  font-size: 18px;
  line-height: 24px;
}

.chart {
  display: flex;
  flex: 1;
  flex-direction: column;
  margin-right: 4px;
  padding: 4px 0 0 4px;
  border: solid #808080;
  border-width: 2px 0 0 2px;
  background: #000;
  box-shadow: inset 2px 2px #404040;
  color: #fff;
  font-size: 18px;
  line-height: 22px;
}
.upper {
  display: flex;
  flex: 1;
  margin: 2px 0 0 2px;
}
.plot {
  position: relative;
  flex: 1;
  border: 2px solid #fff;
}
.canvas {
  position: absolute;
  inset: 0;
  display: block;
  width: 100%;
  height: 100%;
  shape-rendering: crispEdges;
}
.zone-up {
  fill: #286118;
}
.zone-down {
  fill: #73140c;
}
.rows line {
  stroke: #778899;
  stroke-width: 2;
  stroke-dasharray: 6 6;
}
.cols line {
  stroke-width: 2;
  stroke-dasharray: 6 6;
}
.grid-up {
  stroke: #8fe89b;
}
.grid-down {
  stroke: #ee8f98;
}
.grid-none,
.last {
  stroke: #778899;
}
.last {
  stroke-width: 2;
}
.lime {
  fill: #67f93f;
}
.rise {
  fill: #000;
}
.fall {
  fill: #fff;
}
.ha-up {
  fill: #64c94d;
}
.ha-down {
  fill: #cc7391;
}
.mark-up {
  fill: #64c94d;
}
.mark-down {
  fill: #f1a73b;
}
.caption {
  position: absolute;
  left: 6px;
  top: 4px;
  display: flex;
  align-items: center;
}
.caption i {
  margin-right: 9px;
  border: 7px solid transparent;
  border-top: 9px solid #fff;
  border-bottom: 0;
}
.caption span + span {
  margin-left: 24px;
}
.toggle {
  position: absolute;
  left: 1700px;
  top: 0;
  width: 150px;
  height: 40px;
  border: 2px solid #000;
  background: #696969;
  color: #64c94d;
  font-family: 'Liberation Sans', sans-serif;
  font-size: 26px;
}
.prices {
  position: relative;
  width: 90px;
}
.price {
  position: absolute;
  left: 4px;
  padding: 0 5px 0 6px;
}
.price:not(.price-now)::before {
  content: '';
  position: absolute;
  left: -4px;
  top: 10px;
  width: 4px;
  height: 2px;
  background: #fff;
}
.price-now {
  background: #fff;
  color: #000;
}
.times {
  display: flex;
  height: 40px;
  padding-left: 4px;
  overflow: hidden;
}
.times span {
  flex: none;
  width: 128px;
  text-indent: -2px;
  white-space: nowrap;
}
.times span::before {
  content: '';
  display: block;
  width: 2px;
  height: 6px;
  background: #fff;
}

.docs {
  display: flex;
  height: 44px;
  margin-top: 2px;
  padding-left: 2px;
  border-top: 2px solid #fff;
  border-bottom: 2px solid #fff;
  box-shadow: inset 0 2px #000;
}
.docs a {
  position: relative;
  height: 38px;
  padding: 7px 0 0 31px;
  color: #404040;
  text-decoration: none;
}
.docs a:nth-child(1) {
  width: 166px;
}
.docs a:nth-child(2) {
  width: 156px;
  padding-left: 17px;
}
.docs a:nth-child(1)::after {
  content: '';
  position: absolute;
  right: 0;
  top: 6px;
  width: 2px;
  height: 28px;
  background: #404040;
}
.docs a.active {
  padding: 7px 21px 0 19px;
  border: solid #000;
  border-width: 0 2px 2px;
  background: #fff;
  box-shadow: 2px 2px #a6a6a6;
  color: #000;
}
.docs-end {
  display: flex;
  align-items: center;
  gap: 32px;
  margin-left: auto;
  padding-right: 18px;
}
.docs-end i {
  border: 6px solid transparent;
}
.docs-end .to-left {
  border-left: 0;
  border-right-color: #909090;
}
.docs-end .to-right {
  border-right: 0;
  border-left-color: #909090;
}

.status {
  display: flex;
  height: 44px;
  padding-left: 2px;
}
.hint {
  flex: 1;
  padding-top: 13px;
}
.cell {
  display: flex;
  align-items: center;
  flex: none;
  height: 36px;
  margin-top: 6px;
  padding: 7px 0 0 9px;
  border-left: 2px solid #808080;
  white-space: nowrap;
}
.cell-profile {
  width: 218px;
}
.cell-date {
  width: 202px;
}
.cell-price {
  width: 142px;
}
.cell-vol {
  width: 132px;
}
.cell-link {
  gap: 6px;
  width: 245px;
}
.cell-link svg {
  width: 48px;
  height: 28px;
  margin-bottom: 6px;
}
.corner {
  width: 32px;
  height: 32px;
  margin-top: 12px;
}

.dialog {
  position: absolute;
  left: 0;
  top: 327px;
  display: flex;
  flex-direction: column;
  width: 1222px;
  overflow: hidden;
  border: 1px solid #000;
  border-left-color: #999;
  border-radius: 20px;
  background: #e4e4e4;
  box-shadow: 0 24px 60px rgba(0, 0, 0, 0.6);
}
.title {
  display: flex;
  align-items: center;
  gap: 16px;
  height: 57px;
  padding: 0 0 1px 15px;
  border-bottom: 1px solid #000;
  background: #37333a;
  box-shadow: inset 0 2px #75727a;
}
.dot {
  flex: none;
  width: 24px;
  height: 24px;
  border-radius: 50%;
}
.red {
  background: #ee6a5f;
}
.gray {
  background: #5b585e;
}
.green {
  background: #61c555;
}
.title h1 {
  margin: 0 0 2px 32px;
  color: #aeabb1;
  font-family: Inter, sans-serif;
  font-size: 26px;
  font-weight: 700;
  line-height: 30px;
  white-space: pre;
}
.tabs {
  display: flex;
  align-items: flex-end;
  height: 53px;
  padding-left: 14px;
}
.tabs button {
  position: relative;
  height: 36px;
  padding-right: 2px;
  border: 2px solid #fff;
  border-right-color: #404040;
  border-bottom: 0;
  border-radius: 4px 4px 0 0;
  box-shadow: inset -2px 0 #808080;
}
.tabs .current {
  z-index: 1;
  height: 42px;
  margin-bottom: -2px;
  background: #e4e4e4;
}
.panel {
  display: flex;
  gap: 14px;
  margin: 0 15px 0 11px;
  padding: 18px 20px 20px 22px;
  border: 2px solid;
  border-color: #fff #404040 #404040 #fff;
  box-shadow: inset -2px -2px #808080;
}
.list {
  display: flex;
  width: 922px;
  height: 984px;
  border: 2px solid;
  border-color: #808080 #fff #fff #808080;
}
.view {
  flex: 1;
  overflow: hidden;
  border: 2px solid #404040;
  border-right: 0;
  border-bottom-color: #e4e4e4;
  background: #fff;
}
table {
  width: 100%;
  border-collapse: separate;
  border-spacing: 0;
  table-layout: fixed;
}
thead {
  border-bottom: 2px solid #fff;
}
th {
  height: 32px;
  padding: 2px 0 0 10px;
  border-right: 2px solid #fff;
  border-bottom: 2px solid #808080;
  background: #e4e4e4;
  box-shadow: inset -2px 0 #808080;
  font-weight: 400;
  line-height: 28px;
  text-align: left;
}
th:first-child {
  width: 440px;
}
td {
  height: 40px;
  padding: 0;
  border-bottom: 2px solid #c4c4c4;
}
td:first-child {
  border-right: 2px solid #c4c4c4;
}
tbody tr:first-child td {
  height: 42px;
  padding-top: 2px;
}
tbody tr:nth-child(even) {
  background: #ebebeb;
}
.entry {
  display: flex;
  align-items: center;
  gap: 7px;
  height: 38px;
  padding: 2px 0 0 2px;
}
.entry span {
  padding-top: 3px;
}
td + td .entry {
  gap: 5px;
  padding-left: 5px;
}
.entry svg {
  flex: none;
  width: 32px;
  height: 32px;
}
.entry text {
  font-family: 'DejaVu Sans', sans-serif;
  font-weight: 700;
  text-anchor: middle;
}
.num {
  fill: #143a6c;
  font-size: 12px;
}
.abc {
  fill: #5d5212;
  font-size: 15px;
}
.half {
  fill: #2f7484;
  font-size: 18px;
}
.swatch {
  width: 26px;
  height: 26px;
  border: 2px solid #808080;
}
.scroll {
  display: flex;
  flex-direction: column;
  width: 34px;
  border: solid #404040;
  border-width: 2px 2px 0 0;
  border-bottom: 2px solid #e4e4e4;
}
.scroll button,
.thumb {
  flex: none;
  border: 2px solid;
  border-color: #fff #404040 #404040 #fff;
  background: #e4e4e4;
  box-shadow: inset -2px -2px #808080;
}
.scroll button {
  display: flex;
  align-items: center;
  justify-content: center;
  height: 32px;
}
.up::before,
.down::before {
  content: '';
  border: 8px solid transparent;
}
.up::before {
  border-top: 0;
  border-bottom-color: #000;
}
.down::before {
  border-bottom: 0;
  border-top-color: #000;
}
.thumb {
  height: 420px;
}
.track {
  flex: 1;
  background: #f2f2f2;
}
.side {
  display: flex;
  flex: 1;
  flex-direction: column;
  justify-content: flex-end;
  gap: 20px;
  padding-bottom: 2px;
}
.push {
  height: 46px;
  padding: 2px 2px 0 0;
  border: 2px solid;
  border-color: #fff #404040 #404040 #fff;
  box-shadow: inset -2px -2px #808080;
}
.push.default {
  border-color: #000;
  box-shadow: inset 2px 2px #fff, inset -2px -2px #404040, inset -4px -4px #808080;
}
.actions {
  display: flex;
  justify-content: flex-end;
  gap: 12px;
  padding: 22px 15px 15px;
}
.actions .push {
  width: 150px;
}
</style>
